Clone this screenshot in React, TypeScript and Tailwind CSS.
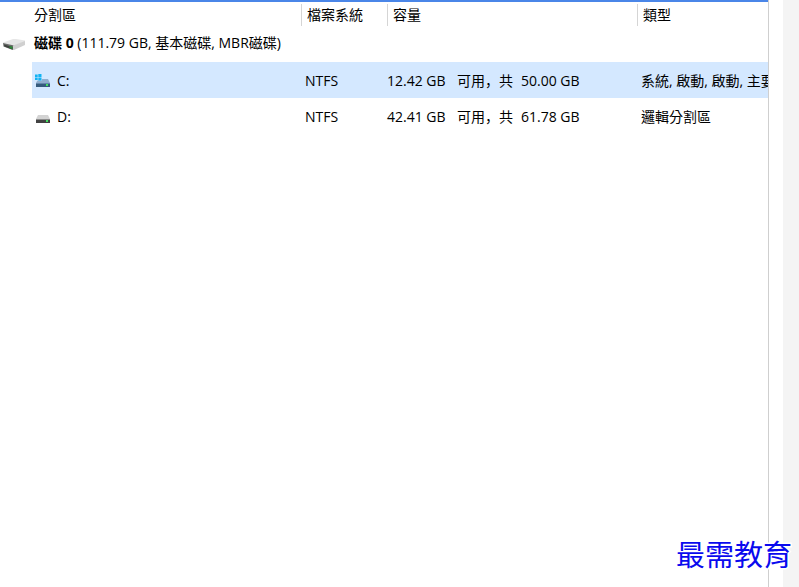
type Volume = {
  letter: string;
  system: boolean;
  fs: string;
  free: string;
  total: string;
  type: string;
};

const volumes: Volume[] = [
  { letter: "C:", system: true, fs: "NTFS", free: "12.42 GB", total: "50.00 GB", type: "系統, 啟動, 啟動, 主要" },
  { letter: "D:", system: false, fs: "NTFS", free: "42.41 GB", total: "61.78 GB", type: "邏輯分割區" },
];

const headers = ["檔案系統", "容量", "類型"];

function DiskIcon() {
  return (
    <svg width="25" height="16" viewBox="0 0 25 16" aria-hidden="true">
      <path d="M3 7.5 13 4h3l9 1.500v1L14 10.500 3 8.500z" fill="#e6e6e6" />
      <path d="m3 8 11 2.500V15l-2-.2L3.500 11.500z" fill="#6b6d6b" />
      <path d="M4 9.500 12.500 12v2.500L4.500 11.500z" fill="#3f423f" />
      <path d="M13 10.500 25 6v4L14 15h-1z" fill="#d0d0d0" />
      <path d="m9.500 11 3 .8V14l-3-1z" fill="#2b8a36" />
    </svg>
  );
}

function VolumeIcon({ system }: { system: boolean }) {
  return (
    <svg width="16" height="16" viewBox="0 0 16 16" aria-hidden="true">
      <path d="M3 6h10l2 4H1z" fill={system ? "#91aece" : "#d3d3d3"} />
      <path d="M1 10h14v4H1z" fill={system ? "#365b7d" : "#424242"} />
      <path d="M1 10h14v1H1z" fill={system ? "#6387ab" : "#8d8d8d"} />
      <path d="M11 11h2v2h-2z" fill="#43e060" />
      {system && (
        <>
          <path d="M0 0h7v7.500H0z" fill="#d5e8ff" />
          <path d="M0 1.500h2.700V4H0zM3.300 1H6.500v3H3.300zM0 4.600h2.700V7H0zM3.300 4.600H6.500v2.900H3.300z" fill="#13b3f3" />
        </>
      )}
    </svg>
  );
}

export default function App() {
  return (
    <div className="relative flex min-h-screen bg-white font-['Open_Sans','Noto_Sans_CJK_TC',sans-serif] text-sm leading-5 text-black">
      <main className="min-w-0 flex-1 overflow-hidden border-r border-[#cfcfcf]">
        <div className="h-[2px] bg-[#4a86e8]" />
        <table className="w-full table-fixed border-collapse whitespace-nowrap text-left">
          <colgroup>
            <col className="w-8" />
            <col className="w-[269px]" />
            <col className="w-[86px]" />
            <col className="w-[250px]" />
            <col />
          </colgroup>
          <thead>
            <tr className="h-[26px]">
              <th className="p-0" />
              <th className="p-0 pl-0.5 font-normal">分割區</th>
              {headers.map((name) => (
                <th key={name} className="p-0 font-normal">
                  <div className="h-[22px] border-l border-[#d5d5d5] pl-[5px] leading-[22px]">{name}</div>
                </th>
              ))}
            </tr>
          </thead>
          <tbody>
            <tr className="h-[34px]">
              <td className="p-0 pb-1">
                <DiskIcon />
              </td>
              <td colSpan={4} className="p-0 pb-1 pl-0.5">
                <b>磁碟 0</b> (111.79 GB, 基本磁碟, MBR磁碟)
              </td>
            </tr>
            {volumes.map((v) => (
              <tr key={v.letter} className="h-9">
                <td className="p-0" />
                <td className={v.system ? "bg-[#d4e8ff] p-0 pt-0.5 pl-[3px]" : "p-0 pt-0.5 pl-[3px]"}>
                  <div className="flex items-center gap-1.5">
                    <VolumeIcon system={v.system} />
                    {v.letter}
                  </div>
                </td>
                <td className={v.system ? "bg-[#d4e8ff] p-0 pt-0.5 pl-1" : "p-0 pt-0.5 pl-1"}>{v.fs}</td>
                <td className={v.system ? "bg-[#d4e8ff] p-0 pt-0.5" : "p-0 pt-0.5"}>
                  <div className="flex items-baseline">
                    <span className="w-[70px]">{v.free}</span>
                    <span className="w-16 font-['Open_Sans','Noto_Sans_CJK_SC',sans-serif]">可用，共</span>
                    <span>{v.total}</span>
                  </div>
                </td>
                <td className={v.system ? "overflow-hidden bg-[#d4e8ff] p-0 pt-0.5 pl-1" : "overflow-hidden p-0 pt-0.5 pl-1"}>
                  {v.type}
                </td>
              </tr>
            ))}
          </tbody>
        </table>
      </main>
      <aside className="ml-[14px] w-4 bg-[#f4f4f4]" />
      <p className="absolute right-[7px] bottom-3.5 font-['Noto_Sans_CJK_TC',sans-serif] text-[29px] leading-10 font-normal text-[#0a0aee] [paint-order:stroke_fill] [-webkit-text-stroke:3px_white]">
        最需教育
      </p>
    </div>
  );
}
